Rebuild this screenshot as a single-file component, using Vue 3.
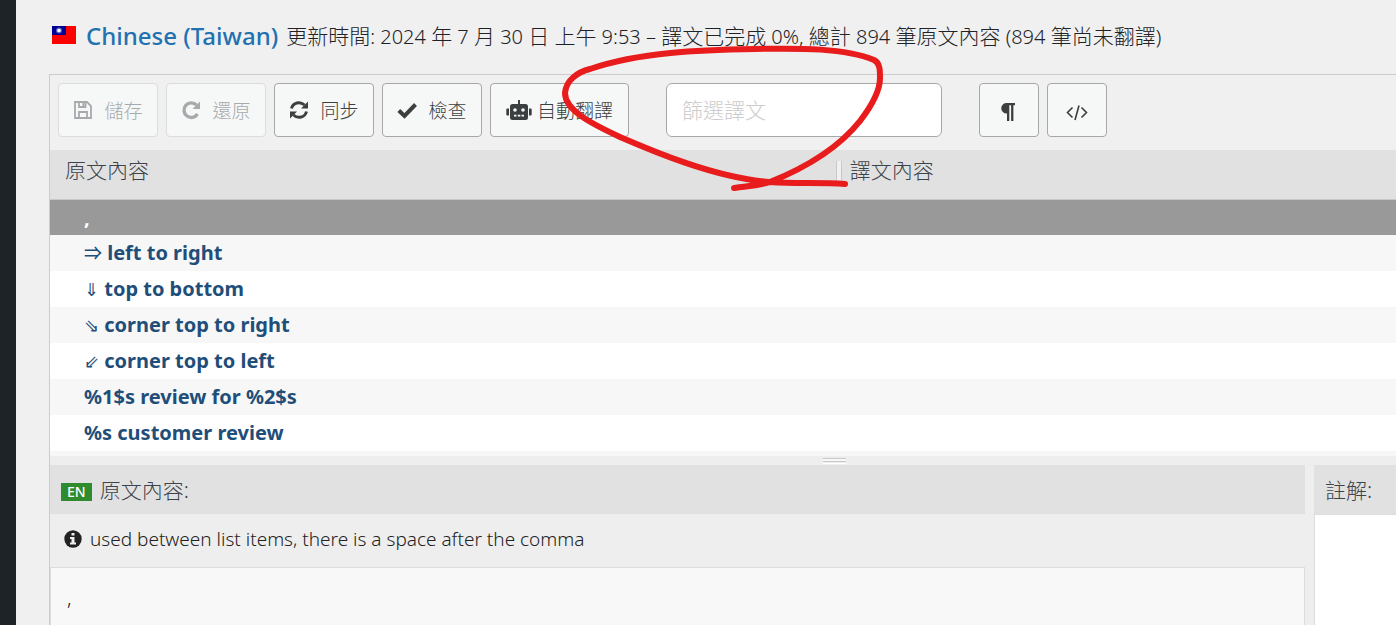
<script setup>
import { ref } from 'vue'

const filter = ref('')
const status = '更新時間: 2024 年 7 月 30 日 上午 9:53 – 譯文已完成 0%, 總計 894 筆原文內容 (894 筆尚未翻譯)'
// Han characters are set one size larger than the Latin text between them.
const statusParts = status.split(/([\u4e00-\u9fff]+)/).filter(Boolean)
const isHan = (part) => /[\u4e00-\u9fff]/.test(part)

const rows = [
  { mark: '', text: ',' },
  { mark: '⇒', text: 'left to right' },
  { mark: '⇓', text: 'top to bottom' },
  { mark: '⇘', text: 'corner top to right' },
  { mark: '⇙', text: 'corner top to left' },
  { mark: '', text: '%1$s review for %2$s' },
  { mark: '', text: '%s customer review' },
  { mark: '', text: '' }
]
const selected = ref(0)
</script>

<template>
  <div class="page">
    <div class="admin-bar"></div>
    <main class="content">
      <header class="title">
        <svg class="flag" viewBox="0 0 24 18" aria-hidden="true">
          <rect width="24" height="18" fill="#f00" />
          <rect width="14" height="9" fill="#000095" />
          <circle cx="7" cy="4.500" r="3" fill="#5a5ac0" />
          <circle cx="7" cy="4.500" r="1.800" fill="#fff" />
        </svg>
        <h1><a href="#">Chinese (Taiwan)</a></h1>
        <p><span v-for="(part, i) in statusParts" :key="i" :class="{ han: isHan(part) }">{{ part }}</span></p>
      </header>

      <section class="editor">
        <div class="toolbar">
          <button class="btn" disabled>
            <svg viewBox="0 0 20 20" aria-hidden="true">
              <path d="M2 2h12l4 4v12H2z M6 18v-6h8v6 M6 2v5h6.500V2" fill="none" stroke="currentColor" stroke-width="1.800" />
              <path d="M9.500 2.500h2v3.500h-2z" fill="currentColor" />
            </svg>
            <span>儲存</span>
          </button>
          <button class="btn" disabled>
            <svg viewBox="0 0 20 20" aria-hidden="true">
              <path d="M15.500 5A7.300 7.300 0 1 0 16.500 14" fill="none" stroke="currentColor" stroke-width="3.400" />
              <path d="M19 1.500V9h-7.500z" fill="currentColor" />
            </svg>
            <span>還原</span>
          </button>
          <button class="btn">
            <svg viewBox="0 0 20 20" aria-hidden="true">
              <path d="M2.500 8.500C4 2.500 11 .800 15.500 5M17.500 11.500C16 17.500 9 19.200 4.500 15" fill="none" stroke="currentColor" stroke-width="3" />
              <path d="M19 1.500v7h-7zM1 18.500v-7h7z" fill="currentColor" />
            </svg>
            <span>同步</span>
          </button>
          <button class="btn">
            <svg viewBox="0 0 20 20" aria-hidden="true">
              <path d="M1.800 10.500l5.700 5.500L18.500 4.500" fill="none" stroke="currentColor" stroke-width="4" />
            </svg>
            <span>檢查</span>
          </button>
          <button class="btn robot">
            <svg viewBox="0 0 26 22" aria-hidden="true">
              <path d="M12 1h2v4h5.500A2.500 2.500 0 0 1 22 7.500V18.500A2.500 2.500 0 0 1 19.500 21H6.500A2.500 2.500 0 0 1 4 18.500V7.500A2.500 2.500 0 0 1 6.500 5H12z" fill="currentColor" />
              <path d="M1.300 9.500H3v7H1.300a1 1 0 0 1-1-1v-5a1 1 0 0 1 1-1zM24.700 9.500H23v7h1.700a1 1 0 0 0 1-1v-5a1 1 0 0 0-1-1z" fill="currentColor" />
              <circle cx="9" cy="11" r="1.800" fill="#f6f8f7" />
              <circle cx="17" cy="11" r="1.800" fill="#f6f8f7" />
              <path d="M8 15.800h2.500v1.700H8zM11.800 15.800h2.500v1.700h-2.500zM15.500 15.800H18v1.700h-2.500z" fill="#f6f8f7" />
            </svg>
            <span>自動翻譯</span>
          </button>
          <input v-model="filter" class="filter" type="text" placeholder="篩選譯文" aria-label="篩選譯文" />
          <button class="btn square" aria-label="¶">
            <svg viewBox="0 0 22 22" aria-hidden="true">
              <path d="M17 2v2.200h-1.600V20h-2.300V4.200h-1.800V20H9V12.500A5.200 5.200 0 0 1 8 2z" fill="currentColor" />
            </svg>
          </button>
          <button class="btn square" aria-label="&lt;/&gt;">
            <svg viewBox="0 0 22 22" aria-hidden="true">
              <path d="M6.500 6.500L1.500 11.500l5 5M15.500 6.500l5 5-5 5M13 4.500L9 19" fill="none" stroke="currentColor" stroke-width="1.600" />
            </svg>
          </button>
        </div>

        <div class="list">
          <table>
            <thead>
              <tr>
                <th class="source">原文內容</th>
                <th class="target"><i class="grip-v"></i>譯文內容</th>
              </tr>
            </thead>
            <tbody>
              <tr v-for="(row, i) in rows" :key="i" :class="{ selected: i === selected }" @click="selected = i">
                <td><span v-if="row.mark" class="mark">{{ row.mark }}</span> {{ row.text }}</td>
                <td></td>
              </tr>
            </tbody>
          </table>
        </div>

        <div class="splitter"><i class="grip-h"></i></div>

        <div class="detail">
          <section class="pane original">
            <h2><b class="lang">EN</b><span>原文內容:</span></h2>
            <p class="note">
              <svg viewBox="0 0 18 18" aria-hidden="true">
                <circle cx="9" cy="9" r="8.700" fill="currentColor" />
                <path d="M7.500 3h3v2.500h-3zM6 7h4.500v5.500H12v2H6v-2h1.500V9H6z" fill="#eee" />
              </svg>
              <span>used between list items, there is a space after the comma</span>
            </p>
            <div class="text">,</div>
          </section>
          <section class="pane comments">
            <h2><label for="comment">註解:</label></h2>
            <textarea id="comment"></textarea>
          </section>
        </div>
      </section>
    </main>

    <svg class="ink" width="300" height="150" viewBox="560 42 300 150" aria-hidden="true">
      <path d="M845 184C822 182 795 184 770 182C715 178 650 150 620 137C590 123 565 110 565 93C566 80 578 72 590 69C640 52 700 50 755 49C800 48 845 48 874 60C880 63 880 70 880 78C880 92 870 108 860 121C840 146 810 166 770 182C757 186 746 186 734 188" />
    </svg>
  </div>
</template>

<style>
body {
  margin: 0;
}
</style>

<style scoped>
* {
  box-sizing: border-box;
}
.page {
  position: relative;
  display: flex;
  height: 100vh;
  overflow: hidden;
  background: #f0f0f0;
  color: #1d2327;
  font-family: "Noto Sans", "Noto Sans CJK TC", sans-serif;
  font-size: 20px;
  font-weight: 300;
}
.admin-bar {
  flex: 0 0 16px;
  background: #1d2327;
}
.content {
  flex: 1;
  min-width: 0;
  display: flex;
  flex-direction: column;
  padding-left: 33px;
}
.title {
  flex: 0 0 74px;
  display: flex;
  align-items: center;
  padding: 0 0 4px 3px;
  white-space: nowrap;
}
.flag {
  width: 24px;
  height: 18px;
  margin-right: 10px;
}
h1 {
  margin: 0 8px 0 0;
  font-size: 24px;
  font-weight: 500;
}
h1 a {
  color: #2271b1;
  text-decoration: none;
}
p {
  margin: 0;
}
.han {
  font-size: 21px;
}
.editor {
  flex: 1;
  min-height: 0;
  display: flex;
  flex-direction: column;
  border: solid #ccc;
  border-width: 1px 0 0 1px;
}
.toolbar {
  flex: 0 0 75px;
  display: flex;
  align-items: flex-start;
  gap: 8px;
  padding: 8px;
}
.btn {
  display: flex;
  align-items: center;
  justify-content: center;
  gap: 11px;
  height: 54px;
  width: 100px;
  padding: 0;
  border: 1px solid #a7a7a7;
  border-radius: 4px;
  background: #f6f8f7;
  color: #3c3f40;
  font: inherit;
  font-size: 19px;
}
.btn:disabled {
  border-color: #dcdcdc;
  color: #a7aaad;
}
.btn svg {
  width: 20px;
  height: 20px;
}
.btn.robot {
  width: 139px;
  gap: 5px;
}
.btn.robot svg {
  width: 26px;
  height: 22px;
}
.btn.square {
  width: 60px;
  padding-top: 4px;
}
.btn.square svg {
  width: 22px;
  height: 22px;
}
.filter {
  width: 276px;
  height: 54px;
  margin: 0 29px;
  padding: 0 15px;
  border: 1px solid #a7a7a7;
  border-radius: 6px;
  background: #fff;
  font: inherit;
  font-size: 21px;
}
.filter::placeholder {
  color: #ccc;
}
.list {
  flex: 306 1 0;
  min-height: 0;
  overflow: hidden;
}
table {
  width: 100%;
  table-layout: fixed;
  border-collapse: collapse;
}
th {
  height: 49px;
  padding: 0 15px 8px;
  border-bottom: 1px solid #c8c8c8;
  background: #e1e1e1;
  color: #3c434a;
  font-size: 21px;
  font-weight: 300;
  line-height: 32px;
  text-align: left;
}
th.source {
  width: 58%;
}
th.target {
  padding-left: 5px;
}
.grip-v {
  display: inline-block;
  width: 6px;
  height: 20px;
  margin-right: 8px;
  border: solid #c8c8c8;
  border-width: 0 1px;
  background: #f0f0f0;
  vertical-align: -3px;
}
td {
  height: 36px;
  padding: 0 34px;
  background: #fff;
  color: #1f4e79;
  font-weight: 700;
  line-height: 35px;
}
tbody tr:nth-child(even) td {
  background: #f7f7f7;
}
tbody tr.selected td {
  height: 35px;
  background: #999;
  color: #fff;
}
.mark {
  font-size: 18px;
  font-weight: 500;
}
.splitter {
  flex: 0 0 9px;
  display: flex;
  justify-content: center;
  align-items: center;
  background: #eee;
}
.grip-h {
  width: 23px;
  height: 6px;
  margin-right: -222px;
  background: linear-gradient(#c8c8c8 0 1px, #f8f8f8 1px 3px, #c8c8c8 3px 4px, #eee 4px 5px, #fff 5px 6px);
}
.detail {
  flex: 160 1 0;
  min-height: 0;
  display: flex;
  gap: 9px;
  background: #eee;
}
.pane {
  display: flex;
  flex-direction: column;
  min-width: 0;
  white-space: nowrap;
}
.original {
  flex: 1255 1 0;
}
.comments {
  flex: 82 1 0;
}
h2 {
  flex: 0 0 49px;
  display: flex;
  align-items: center;
  margin: 0;
  padding: 0 11px 2px;
  background: #e1e1e1;
  color: #3c434a;
  font-size: 21px;
  font-weight: 300;
}
.lang {
  margin: 6px 8px 0 0;
  padding: 0 6px;
  background: #2e8b2e;
  color: #fff;
  font-size: 14px;
  font-weight: 500;
  line-height: 18px;
}
.note {
  flex: 0 0 53px;
  display: flex;
  align-items: center;
  gap: 8px;
  padding: 0 14px 4px;
  color: #222;
  font-size: 19px;
}
.note svg {
  width: 18px;
  height: 18px;
}
.text {
  flex: 1;
  padding: 16px;
  border: 1px solid #ddd;
  border-bottom: 0;
  background: #f8f8f8;
}
textarea {
  flex: 1;
  width: 100%;
  border: 1px solid #ddd;
  border-width: 1px 0 0 1px;
  background: #fff;
  resize: none;
}
.ink {
  position: absolute;
  top: 42px;
  left: 560px;
  overflow: visible;
  fill: none;
  stroke: #e81c1c;
  stroke-width: 6;
  stroke-linecap: round;
  stroke-linejoin: round;
  pointer-events: none;
}
</style>
